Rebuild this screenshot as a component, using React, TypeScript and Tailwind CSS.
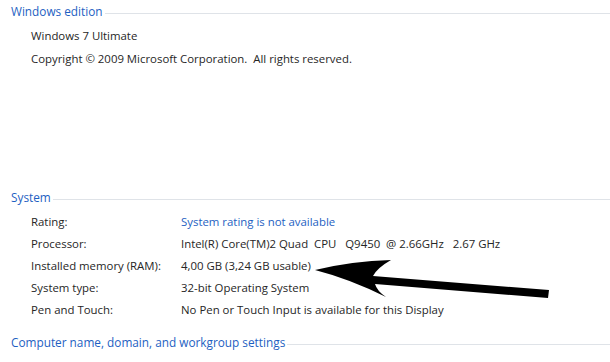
const rows = [
  { label: "Rating:", value: "System rating is not available", link: true },
  { label: "Processor:", value: "Intel(R) Core(TM)2 Quad  CPU   Q9450  @ 2.66GHz   2.67 GHz" },
  { label: "Installed memory (RAM):", value: "4,00 GB (3,24 GB usable)" },
  { label: "System type:", value: "32-bit Operating System" },
  { label: "Pen and Touch:", value: "No Pen or Touch Input is available for this Display" },
];

function Heading({ title }: { title: string }) {
  return (
    <div className="flex h-6 items-center pl-[11px]">
      <span className="whitespace-nowrap text-[11.8px] text-[#1e5fc2]">{title}</span>
      <div className="ml-[2px] mt-[2px] h-px flex-1 bg-[#dfe3e8]" />
    </div>
  );
}

export default function App() {
  return (
    <div
      className="relative h-[362px] w-[610px] overflow-hidden bg-white text-[11.4px] text-[#262626]"
      style={{ fontFamily: '"Open Sans", "Noto Sans", sans-serif' }}
    >
      <Heading title="Windows edition" />
      <div className="pl-[31px]">
        <div className="flex h-[23px] items-center">Windows 7 Ultimate</div>
        <div className="flex h-[23px] items-center whitespace-pre">
          Copyright © 2009 Microsoft Corporation.  All rights reserved.
        </div>
      </div>

      <div className="mt-[116px]">
        <Heading title="System" />
      </div>
      <div className="mt-px pl-[31px]">
        {rows.map((r) => (
          <div key={r.label} className="flex h-[22px] items-center">
            <div className="w-[150px] shrink-0">{r.label}</div>
            <div className={"whitespace-pre " + (r.link ? "text-[#1e5fc2]" : "")}>{r.value}</div>
          </div>
        ))}
      </div>

      <div className="mt-[10px]">
        <Heading title="Computer name, domain, and workgroup settings" />
      </div>

      {/* hand-drawn arrow over the page */}
      <svg className="absolute left-0 top-0" width="610" height="362" viewBox="0 0 610 362">
        <path
          d="M315 270 Q352 261 391 260 Q377 268 373 276 L549 290 L548 298 L375 284 Q377 291 386 297 Q350 279 315 270 Z"
          fill="#000"
        />
      </svg>
    </div>
  );
}
